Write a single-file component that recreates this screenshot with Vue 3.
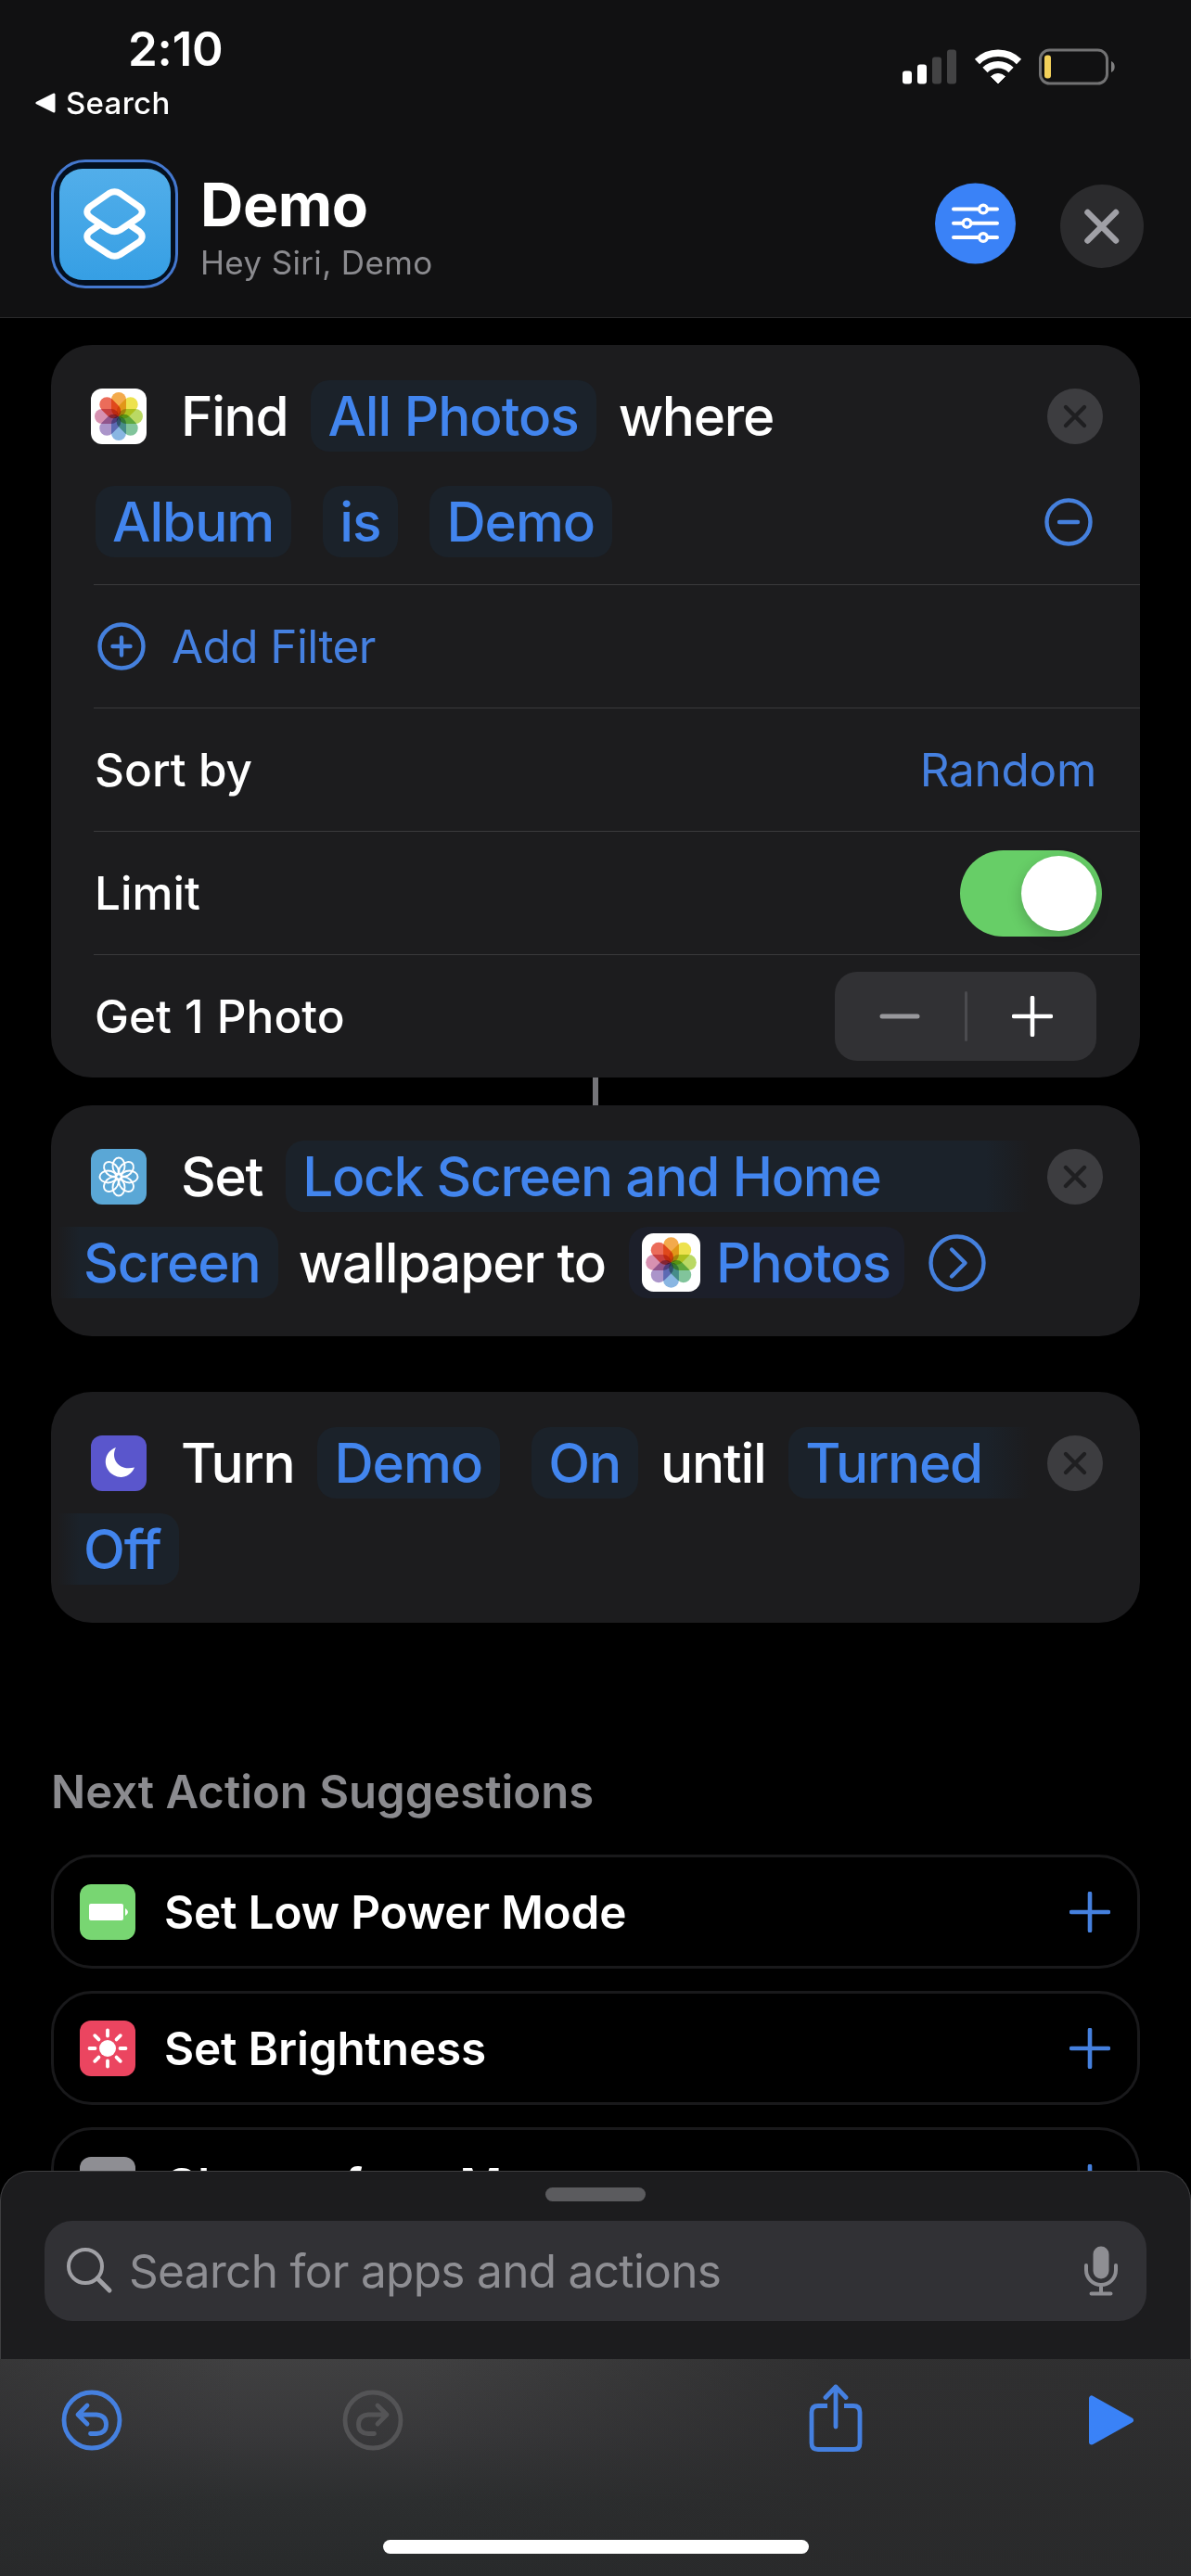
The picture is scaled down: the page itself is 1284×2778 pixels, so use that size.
<script setup>

    import { ref } from 'vue';

    const limitOn = ref(true);
    const photoCount = ref(1);

    const petals = [
        { angle: 0, color: '#f2a33c' },
        { angle: 45, color: '#ece03f' },
        { angle: 90, color: '#b4d657' },
        { angle: 135, color: '#76bf93' },
        { angle: 180, color: '#7fb0e0' },
        { angle: 225, color: '#a48cc6' },
        { angle: 270, color: '#d488ab' },
        { angle: 315, color: '#ea5f4c' }
    ];

    const angles = petals.map( petal => petal.angle );

    const suggestions = [
        { id: 'battery', name: 'Set Low Power Mode' },
        { id: 'sun', name: 'Set Brightness' },
        { id: 'menu', name: 'Choose from Menu' }
    ];

    const toggleLimit = () => {
        limitOn.value = !limitOn.value;
    }

</script>

<template>

    <!-- shared icons -->
    <svg class="symbols" width="0" height="0">
        <symbol id="photos" viewBox="0 0 60 60">
            <rect width="60" height="60" rx="12" fill="#fff" />
            <rect
                v-for="petal in petals"
                :key="petal.angle"
                class="petal"
                x="22" y="4" width="16" height="26" rx="8"
                :fill="petal.color"
                :transform="`rotate(${petal.angle} 30 30)`"
            />
        </symbol>
        <symbol id="remove" viewBox="0 0 60 60">
            <circle cx="30" cy="30" r="30" fill="#3d3d40" />
            <path d="M20 20 40 40M40 20 20 40" stroke="#1f1f21" stroke-width="4.4" stroke-linecap="round" />
        </symbol>
        <symbol id="plus" viewBox="0 0 44 44">
            <path d="M22 2V42M2 22H42" stroke="currentColor" stroke-width="4.6" stroke-linecap="round" />
        </symbol>
    </svg>

    <div class="screen">

        <header class="header">
            <div class="status">
                <div>
                    <div class="time">2:10</div>
                    <div class="back">
                        <svg width="22" height="22" viewBox="0 0 22 22">
                            <path d="M2 11 20 2V20Z" fill="#fff" stroke="#fff" stroke-width="3" stroke-linejoin="round" />
                        </svg>
                        Search
                    </div>
                </div>
                <div class="status-icons">
                    <svg width="58" height="38" viewBox="0 0 58 38">
                        <rect y="23.500" width="10" height="14" rx="3" fill="#fff" />
                        <rect x="16" y="16.500" width="10" height="21" rx="3" fill="#fff" />
                        <rect x="32" y="8.500" width="10" height="29" rx="3" fill="#434344" />
                        <rect x="48" y="0.500" width="10" height="37" rx="3" fill="#434344" />
                    </svg>
                    <svg class="wifi" width="52" height="38" viewBox="0 0 52 38">
                        <path d="M3.500 13.500A32 32 0 0 1 48.500 13.500" fill="none" stroke="#fff" stroke-width="7.500" />
                        <path d="M12 22.500A20 20 0 0 1 40 22.500" fill="none" stroke="#fff" stroke-width="7.500" />
                        <path d="M18.500 29.500A11 11 0 0 1 33.500 29.500L26 37Z" fill="#fff" stroke="#fff" stroke-linejoin="round" />
                    </svg>
                    <svg width="83" height="40" viewBox="0 0 83 40">
                        <rect x="1.500" y="2" width="72" height="36" rx="10" fill="none" stroke="#727273" stroke-width="3" />
                        <path d="M78 14A6 6.500 0 0 1 78 26Z" fill="#808081" />
                        <rect x="6" y="7.500" width="7" height="25" rx="3" fill="#f3d15a" />
                    </svg>
                </div>
            </div>

            <div class="title-row">
                <div class="app-icon">
                    <svg width="120" height="120" viewBox="0 0 120 120">
                        <g fill="none" stroke="#fff" stroke-width="7" stroke-linejoin="round">
                            <path d="M42.500 61 33 67.500Q26.500 73 33 79L53.500 92.500Q59.500 96 65.500 92.500L86 79Q92.500 73 86 67.500L76.500 61" />
                            <path d="M53.500 26.500Q59.500 23 65.500 26.500L85.500 40.500Q93 46.500 85.500 52.500L65.500 66Q59.500 69.500 53.500 66L33.500 52.500Q26 46.500 33.500 40.500Z" />
                        </g>
                    </svg>
                </div>
                <div class="title">
                    <h1>Demo</h1>
                    <p>Hey Siri, Demo</p>
                </div>
                <svg class="settings" width="88" height="88" viewBox="0 0 88 88">
                    <circle cx="43.500" cy="44" r="43.500" fill="#3a82f7" />
                    <g fill="#3a82f7" stroke="#fff" stroke-width="4" stroke-linecap="round">
                        <path d="M20 28.500H67M20 43.800H67M20 59H67" />
                        <circle cx="52" cy="28.500" r="4.300" stroke-width="3.400" />
                        <circle cx="34.500" cy="43.800" r="4.300" stroke-width="3.400" />
                        <circle cx="52" cy="59" r="4.300" stroke-width="3.400" />
                    </g>
                </svg>
                <svg class="close" width="90" height="90" viewBox="0 0 90 90">
                    <circle cx="45" cy="45" r="45" fill="#2b2b2d" />
                    <path d="M29.500 30 60 60.500M60 30 29.500 60.500" stroke="#a0a0a6" stroke-width="6.500" stroke-linecap="round" />
                </svg>
            </div>
        </header>

        <main class="content">

            <section class="card find">
                <div class="line first">
                    <svg class="icon"><use href="#photos" /></svg>
                    <span class="word">Find</span>
                    <span class="pill">All Photos</span>
                    <span class="word">where</span>
                    <svg class="icon remove"><use href="#remove" /></svg>
                </div>
                <div class="line filter">
                    <span class="pill">Album</span>
                    <span class="pill">is</span>
                    <span class="pill">Demo</span>
                    <svg class="minus" width="52" height="52" viewBox="0 0 52 52">
                        <circle cx="26" cy="26" r="23.500" />
                        <path d="M16 26H36" />
                    </svg>
                </div>
                <div class="row">
                    <svg class="add" width="52" height="52" viewBox="0 0 52 52">
                        <circle cx="26" cy="26" r="23.500" />
                        <path d="M16.500 26H35.500M26 16.500V35.500" />
                    </svg>
                    <span class="link">Add Filter</span>
                </div>
                <div class="row">
                    <span>Sort by</span>
                    <span class="link value">Random</span>
                </div>
                <div class="row">
                    <span>Limit</span>
                    <div class="switch" :class="{ on: limitOn }" @click="toggleLimit"></div>
                </div>
                <div class="row">
                    <span class="count">Get {{ photoCount }} Photo</span>
                    <div class="stepper">
                        <svg width="44" height="44" viewBox="0 0 44 44">
                            <path d="M3 22H41" stroke="#98989c" stroke-width="5" stroke-linecap="round" />
                        </svg>
                        <i></i>
                        <svg width="44" height="44"><use href="#plus" /></svg>
                    </div>
                </div>
            </section>

            <div class="connector"></div>

            <section class="card">
                <div class="line">
                    <svg class="icon" viewBox="0 0 60 60">
                        <rect width="60" height="60" rx="12" fill="#5aa7d6" />
                        <g fill="none" stroke="#fff" stroke-width="1.900">
                            <ellipse
                                v-for="angle in angles"
                                :key="angle"
                                cx="30" cy="18.500" rx="6.500" ry="9"
                                :transform="`rotate(${angle} 30 30)`"
                            />
                            <circle cx="30" cy="30" r="3.200" />
                        </g>
                    </svg>
                    <span class="word">Set</span>
                    <span class="pill open">Lock Screen and Home</span>
                    <svg class="icon remove"><use href="#remove" /></svg>
                </div>
                <div class="line wrapped">
                    <span class="pill rest">Screen</span>
                    <span class="word">wallpaper to</span>
                    <span class="pill variable">
                        <svg width="63" height="63"><use href="#photos" /></svg>
                        Photos
                    </span>
                    <svg class="disclose" width="62" height="62" viewBox="0 0 62 62">
                        <circle cx="31" cy="31" r="28.500" />
                        <path d="M25 16.500 39.500 31 25 45.500" />
                    </svg>
                </div>
            </section>

            <section class="card focus">
                <div class="line">
                    <svg class="icon" viewBox="0 0 60 60">
                        <rect width="60" height="60" rx="12" fill="#5a56cc" />
                        <path d="M27 13C21 24 29 39 47 34.500C43 44 33 47.500 25 43C12 36 13 18 27 13Z" fill="#fff" />
                    </svg>
                    <span class="word">Turn</span>
                    <span class="pill">Demo</span>
                    <span class="pill next">On</span>
                    <span class="word">until</span>
                    <span class="pill open">Turned</span>
                    <svg class="icon remove"><use href="#remove" /></svg>
                </div>
                <div class="line wrapped">
                    <span class="pill rest">Off</span>
                </div>
            </section>

            <h2>Next Action Suggestions</h2>

            <ul class="suggestions">
                <li v-for="suggestion in suggestions" :key="suggestion.id">
                    <svg class="icon" viewBox="0 0 60 60">
                        <g v-if="suggestion.id==='battery'">
                            <rect width="60" height="60" rx="12" fill="#78d672" />
                            <rect x="10" y="21" width="37" height="18" rx="2" fill="#fff" />
                            <path d="M49 26Q55 30 49 34Z" fill="#fff" />
                        </g>
                        <g v-else-if="suggestion.id==='sun'">
                            <rect width="60" height="60" rx="12" fill="#eb4560" />
                            <circle cx="30" cy="30" r="9" fill="#fff" />
                            <path
                                v-for="angle in angles"
                                :key="angle"
                                d="M30 10.500V16.500"
                                stroke="#fff" stroke-width="3.800" stroke-linecap="round"
                                :transform="`rotate(${angle} 30 30)`"
                            />
                        </g>
                        <g v-else>
                            <rect width="60" height="60" rx="12" fill="#8e8e93" />
                            <rect x="14" y="15" width="32" height="30" rx="3" fill="#fff" />
                        </g>
                    </svg>
                    <span>{{ suggestion.name }}</span>
                    <svg class="plus" width="44" height="44"><use href="#plus" /></svg>
                </li>
            </ul>

        </main>

        <div class="sheet">
            <div class="handle"></div>
            <div class="search">
                <svg width="52" height="52" viewBox="0 0 52 52">
                    <g fill="none" stroke="#a0a0a5" stroke-linecap="round">
                        <circle cx="21" cy="21" r="18" stroke-width="4" />
                        <path d="M34 34 47 47" stroke-width="5" />
                    </g>
                </svg>
                <span>Search for apps and actions</span>
                <svg class="mic" width="38" height="54" viewBox="0 0 38 54">
                    <rect x="10.500" y="0.500" width="17" height="35" rx="8.500" fill="#8e8e93" />
                    <path d="M3 21V26A16 16 0 0 0 35 26V21M19 43V51M8.500 51.500H29.500" fill="none" stroke="#8e8e93" stroke-width="4" stroke-linecap="round" />
                </svg>
            </div>
        </div>

        <footer class="toolbar">
            <div class="tools">
                <svg class="undo" width="66" height="66" viewBox="0 0 66 66">
                    <circle cx="33" cy="33" r="30" />
                    <path d="M28 17 18 27 28 37M18.500 27H38Q48.500 28 48.500 37.500T38 47.500H31.500" />
                </svg>
                <svg class="redo" width="66" height="66" viewBox="0 0 66 66">
                    <circle cx="33" cy="33" r="30" />
                    <path d="M38 17 48 27 38 37M47.500 27H28Q17.500 28 17.500 37.500T28 47.500H34.500" />
                </svg>
                <svg class="share" width="58" height="74" viewBox="0 0 58 74">
                    <path d="M20 23.500H10Q3 23.500 3 30.500V63.500Q3 70.500 10 70.500H48Q55 70.500 55 63.500V30.500Q55 23.500 48 23.500H38" />
                    <path d="M29 46V3M18 14.500 29 3 40 14.500" stroke-linecap="round" stroke-linejoin="round" />
                </svg>
                <svg class="play" width="50" height="56" viewBox="0 0 50 56">
                    <path d="M4 4.500V51.500L46 28Z" fill="#3a82f7" stroke="#3a82f7" stroke-width="6" stroke-linejoin="round" />
                </svg>
            </div>
            <div class="home"></div>
        </footer>

    </div>

</template>

<style>
    body{
        background-color: #000;
    }
</style>

<style scoped>
    .symbols{
        position: absolute;
    }

    .petal{
        mix-blend-mode: multiply;
        opacity: .92;
    }

    .screen{
        width: 1284px;
        height: 2778px;
        display: flex;
        flex-direction: column;
        overflow: hidden;
        background-color: #000;
        color: #fff;
        font-family: Inter, "Liberation Sans", sans-serif;
        white-space: nowrap;
    }

    svg{
        display: block;
        flex: none;
    }

    h1, h2, p, ul{
        margin: 0;
        padding: 0;
    }

    .header{
        box-sizing: border-box;
        height: 343px;
        background-color: #111112;
        border-bottom: 1px solid #2a2a2b;
    }

    .status{
        box-sizing: border-box;
        height: 172px;
        padding: 28px 81px 0 38px;
        display: flex;
        justify-content: space-between;
    }

    .time{
        margin-left: 100px;
        font-size: 51px;
        line-height: 50px;
        font-weight: 600;
        letter-spacing: -0.200px;
    }

    .back{
        margin-top: 13px;
        display: flex;
        align-items: center;
        gap: 11px;
        font-size: 33px;
        line-height: 40px;
        font-weight: 500;
        letter-spacing: 0.300px;
    }

    .status-icons{
        height: 40px;
        margin-top: 24px;
        display: flex;
        align-items: center;
    }

    .wifi{
        margin: 0 18px 0 19px;
    }

    .title-row{
        display: flex;
        padding: 0 51px 0 55px;
    }

    .app-icon{
        box-sizing: border-box;
        width: 137px;
        height: 139px;
        display: flex;
        align-items: center;
        justify-content: center;
        border: 3px solid #4478cf;
        border-radius: 37px;
        background-color: #04101f;
    }

    .app-icon svg{
        border-radius: 25px;
        background: linear-gradient(#52aeea, #369fe4);
    }

    .title{
        flex: 1;
        padding: 17px 0 0 24px;
    }

    h1{
        font-size: 64px;
        line-height: 64px;
        font-weight: 700;
        letter-spacing: -0.300px;
    }

    p{
        margin-top: 7px;
        font-size: 35px;
        line-height: 46px;
        letter-spacing: 0.350px;
        color: #8b8b8f;
    }

    .settings{
        margin-top: 25px;
    }

    .close{
        margin: 27px 0 0 47px;
    }

    .content{
        height: 1998px;
        box-sizing: border-box;
        padding: 29px 55px 0;
        overflow: hidden;
    }

    .card{
        box-sizing: border-box;
        height: 249px;
        padding: 30px 40px 0 43px;
        border-radius: 44px;
        background-color: #1c1c1e;
    }

    .card.find{
        height: 790px;
        padding: 31px 0 0;
    }

    .card.focus{
        margin-top: 60px;
    }

    .line{
        height: 93px;
        display: flex;
        align-items: center;
        font-size: 58.500px;
        font-weight: 500;
        letter-spacing: -1.300px;
    }

    .line.first{
        height: 91px;
        margin-bottom: 1px;
        padding: 0 40px 0 43px;
    }

    .line.filter{
        height: 135px;
        padding: 0 51px 0 48px;
        gap: 34px;
    }

    .icon{
        width: 60px;
        height: 60px;
    }

    .icon + .word{
        margin-left: 37px;
    }

    .remove, .minus{
        margin-left: auto;
    }

    .pill{
        height: 77px;
        display: flex;
        align-items: center;
        padding: 0 19px 0 18px;
        border-radius: 20px;
        background-color: #1b222a;
        color: #4285ee;
        letter-spacing: -1.050px;
    }

    .word + .pill{
        margin-left: 25px;
    }

    .pill + .word{
        margin-left: 24px;
    }

    .pill.next{
        margin-left: 34px;
    }

    .pill.open{
        flex: 1;
        margin-right: 18px;
        padding-right: 0;
        border-radius: 20px 0 0 20px;
        background: linear-gradient(90deg, #1b222a calc(100% - 48px), #1c1c1e);
        letter-spacing: -1.250px;
    }

    .pill.rest{
        margin-left: -36px;
        padding-left: 28px;
        border-radius: 0 20px 20px 0;
        background: linear-gradient(90deg, #1c1c1e, #1b222a 24px);
    }

    .pill.rest + .word{
        margin-left: 22px;
        letter-spacing: -1.100px;
    }

    .pill.variable{
        gap: 17px;
        padding: 0 15px 0 14px;
        background-color: #1c1f2a;
    }

    .minus, .add, .disclose{
        fill: none;
        stroke: #4580dd;
        stroke-width: 4.400;
        stroke-linecap: round;
        stroke-linejoin: round;
    }

    .disclose{
        margin-left: 26px;
    }

    .row{
        height: 132px;
        margin-left: 46px;
        padding-right: 47px;
        display: flex;
        align-items: center;
        justify-content: space-between;
        border-top: 1px solid #3a3a3c;
        font-size: 49.500px;
        font-weight: 500;
    }

    .row > span:first-child{
        margin-left: 1px;
    }

    .count{
        word-spacing: 1px;
    }

    .link{
        color: #4580e0;
        font-weight: 400;
        letter-spacing: -0.600px;
    }

    .value{
        letter-spacing: -0.300px;
    }

    .add{
        margin-left: 4px;
    }

    .add + .link{
        flex: 1;
        margin-left: 28px;
    }

    .switch{
        width: 153px;
        height: 93px;
        box-sizing: border-box;
        margin-right: -6px;
        padding: 6px;
        display: flex;
        border-radius: 47px;
        background-color: #39393d;
    }

    .switch.on{
        justify-content: flex-end;
        background-color: #67ce67;
    }

    .switch::after{
        content: '';
        width: 81px;
        height: 81px;
        border-radius: 50%;
        background-color: #fff;
        box-shadow: 0 6px 16px rgba(0, 0, 0, .2);
    }

    .stepper{
        width: 282px;
        height: 96px;
        display: flex;
        align-items: center;
        justify-content: center;
        gap: 48px;
        border-radius: 24px;
        background-color: #313134;
    }

    .stepper i{
        width: 3px;
        height: 54px;
        border-radius: 2px;
        background-color: #4b4b4f;
    }

    .connector{
        width: 6px;
        height: 30px;
        margin: 0 auto;
        background-color: #747478;
    }

    h2{
        margin: 153px 0 37px 0;
        font-size: 49px;
        line-height: 60px;
        font-weight: 600;
        color: #8b8b8f;
    }

    .suggestions{
        display: flex;
        flex-direction: column;
        gap: 24px;
        list-style: none;
    }

    .suggestions li{
        box-sizing: border-box;
        height: 123px;
        display: flex;
        align-items: center;
        padding: 0 29px 0 28px;
        border: 3px solid #19191b;
        border-radius: 44px;
        font-size: 49.500px;
        font-weight: 600;
        letter-spacing: -0.200px;
    }

    .suggestions span{
        margin-left: 31px;
    }

    .plus{
        margin-left: auto;
        color: #4580de;
    }

    .sheet{
        box-sizing: border-box;
        height: 203px;
        padding: 17px 47px 0;
        border: 1px solid #3e3e40;
        border-bottom: 0;
        border-radius: 32px 32px 0 0;
        background-color: #1c1c1e;
    }

    .handle{
        width: 108px;
        height: 15px;
        margin: 0 auto 21px;
        border-radius: 8px;
        background-color: #5b5b5e;
    }

    .search{
        box-sizing: border-box;
        height: 108px;
        display: flex;
        align-items: center;
        padding: 0 30px 0 23px;
        border-radius: 30px;
        background-color: #313135;
        font-size: 49.500px;
        color: #8e8e93;
    }

    .search span{
        margin-left: 16px;
        letter-spacing: -0.670px;
    }

    .mic{
        margin-left: auto;
    }

    .toolbar{
        flex: 1;
        background: linear-gradient(90deg, rgba(40, 40, 41, .4), rgba(64, 64, 65, 0) 20%, rgba(64, 64, 65, 0) 35%, rgba(42, 42, 43, .75) 70%), linear-gradient(#404041, #38383a 35%, #2c2e2f 65%, #282a2b);
    }

    .tools{
        height: 132px;
        padding: 0 61px 0 66px;
        display: flex;
        align-items: center;
    }

    .undo, .redo, .share{
        fill: none;
        stroke: #4580e0;
        stroke-width: 4.800;
        stroke-linecap: round;
        stroke-linejoin: round;
    }

    .redo{
        margin-left: 237px;
        stroke: #545456;
    }

    .share{
        margin: -5px 0 0 437px;
        stroke-linecap: butt;
    }

    .play{
        margin-left: auto;
    }

    .home{
        width: 459px;
        height: 15px;
        margin: 63px auto 0;
        border-radius: 8px;
        background-color: #fff;
    }
</style>
